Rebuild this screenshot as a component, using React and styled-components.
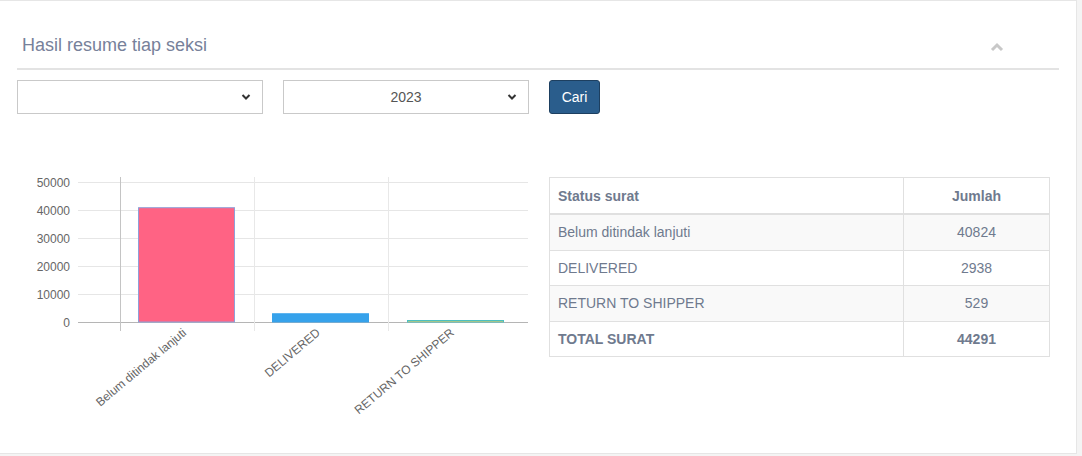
import React from 'react';
import styled, { createGlobalStyle } from 'styled-components';

const GlobalStyle = createGlobalStyle`
  body {
    margin: 0;
    background: #f4f4f4;
    font-family: "Liberation Sans", Arial, sans-serif;
  }
`;

const Card = styled.section`
  box-sizing: border-box;
  width: 1077px;
  height: 454px;
  background: #fff;
  border-top: 1px solid #e6e6e6;
  border-right: 1px solid #e6e6e6;
  border-bottom: 1px solid #e6e6e6;
  padding: 0 17px 0 17px;
`;

const Header = styled.div`
  display: flex;
  align-items: center;
  justify-content: space-between;
  height: 69px;
  padding: 22px 5px 0 5px;
  box-sizing: border-box;
  border-bottom: 2px solid #e3e3e3;
`;

const Title = styled.h3`
  margin: 0;
  font-size: 18px;
  font-weight: normal;
  color: #77819a;
`;

const Collapse = styled.span`
  display: flex;
  margin-right: 50px;
  margin-top: 2px;
`;

const Controls = styled.div`
  display: flex;
  gap: 20px;
  margin-top: 10px;
`;

const SelectWrap = styled.div`
  position: relative;
  width: 246px;
  height: 34px;
`;

const Select = styled.select`
  appearance: none;
  box-sizing: border-box;
  width: 100%;
  height: 100%;
  border: 1px solid #c9c9c9;
  border-radius: 0;
  background: #fff;
  font-family: "Liberation Sans", Arial, sans-serif;
  font-size: 14px;
  color: #555;
  padding: 0 8px;
  text-align-last: ${p => (p.$center ? 'center' : 'left')};
  outline: none;
`;

const Arrow = styled.svg`
  position: absolute;
  right: 12px;
  top: 13px;
  pointer-events: none;
`;

const Button = styled.button`
  box-sizing: border-box;
  height: 34px;
  width: 51px;
  background: #2a5d8c;
  border: 1px solid #1d3f60;
  border-radius: 3px;
  color: #fff;
  font-family: "Liberation Sans", Arial, sans-serif;
  font-size: 14px;
  padding: 0;
`;

const Body = styled.div`
  display: flex;
  align-items: flex-start;
  margin-top: 55px;
`;

const Chart = styled.svg`
  display: block;
  flex: none;
`;

const Table = styled.table`
  margin-top: 8px;
  margin-left: 19px;
  width: 501px;
  border-collapse: collapse;
  font-size: 14px;
  color: #6f7a8e;
`;

const Th = styled.th`
  height: 35px;
  padding: 0 8px;
  border: 1px solid #e0e0e0;
  border-bottom: 2px solid #e0e0e0;
  font-weight: bold;
  text-align: ${p => (p.$center ? 'center' : 'left')};
`;

const Row = styled.tr`
  background: ${p => (p.$striped ? '#f9f9f9' : '#fff')};
`;

const Td = styled.td`
  height: 34.5px;
  padding: 0 8px;
  border: 1px solid #e0e0e0;
  font-weight: ${p => (p.$bold ? 'bold' : 'normal')};
  text-align: ${p => (p.$center ? 'center' : 'left')};
`;

const rows = [
  { label: 'Belum ditindak lanjuti', value: 40824 },
  { label: 'DELIVERED', value: 2938 },
  { label: 'RETURN TO SHIPPER', value: 529 },
];

const bars = [
  { x: 121, fill: '#ff6384', stroke: '#8fa0d8' },
  { x: 255, fill: '#36a2eb', stroke: '#36a2eb' },
  { x: 390, fill: '#ffcd56', stroke: '#4bc0c0' },
];

const ZERO = 153;
const STEP = 28;

const BarChart = () => (
  <Chart width="513" height="270" viewBox="0 0 513 270">
    {[0, 1, 2, 3, 4, 5].map(i => {
      const y = ZERO - i * STEP + 0.5;
      return (
        <g key={i}>
          <line x1="61" x2="511" y1={y} y2={y} stroke={i === 0 ? '#b5b5b5' : '#e6e6e6'} />
          <text
            x="53"
            y={y + 4}
            textAnchor="end"
            fontSize="12"
            fill="#666"
            fontFamily="Liberation Sans, Arial, sans-serif"
          >
            {i * 10000}
          </text>
        </g>
      );
    })}
    {[103, 237, 371].map((x, i) => (
      <line
        key={x}
        x1={x + 0.5}
        x2={x + 0.5}
        y1="8"
        y2="162"
        stroke={i === 0 ? '#c4c4c4' : '#e8e8e8'}
      />
    ))}
    {rows.map((r, i) => {
      const h = Math.max((r.value / 10000) * STEP, 1.5);
      return (
        <rect
          key={r.label}
          x={bars[i].x + 0.5}
          y={ZERO - h}
          width="96"
          height={h}
          fill={bars[i].fill}
          stroke={bars[i].stroke}
          strokeWidth="1"
        />
      );
    })}
    {rows.map((r, i) => {
      const x = 170 + i * 134;
      return (
        <text
          key={r.label}
          x={x}
          y="165"
          textAnchor="end"
          fontSize="12"
          fill="#666"
          fontFamily="Liberation Sans, Arial, sans-serif"
          transform={`rotate(-40 ${x} 165)`}
        >
          {r.label}
        </text>
      );
    })}
  </Chart>
);

const App = () => {
  const total = rows.reduce((s, r) => s + r.value, 0);
  return (
    <>
      <GlobalStyle />
      <Card>
        <Header>
          <Title>Hasil resume tiap seksi</Title>
          <Collapse>
            <svg width="14" height="10" viewBox="0 0 14 10">
              <polyline points="2,8 7,3 12,8" fill="none" stroke="#c8c8c8" strokeWidth="3" />
            </svg>
          </Collapse>
        </Header>
        <Controls>
          <SelectWrap>
            <Select defaultValue="">
              <option value="" />
            </Select>
            <Arrow width="10" height="8" viewBox="0 0 10 8">
              <polyline points="1.5,2 5,5.5 8.5,2" fill="none" stroke="#333" strokeWidth="2" />
            </Arrow>
          </SelectWrap>
          <SelectWrap>
            <Select $center defaultValue="2023">
              <option value="2023">2023</option>
            </Select>
            <Arrow width="10" height="8" viewBox="0 0 10 8">
              <polyline points="1.5,2 5,5.5 8.5,2" fill="none" stroke="#333" strokeWidth="2" />
            </Arrow>
          </SelectWrap>
          <Button>Cari</Button>
        </Controls>
        <Body>
          <BarChart />
          <Table>
            <thead>
              <tr>
                <Th>Status surat</Th>
                <Th $center style={{ width: '129px' }}>Jumlah</Th>
              </tr>
            </thead>
            <tbody>
              {rows.map((r, i) => (
                <Row key={r.label} $striped={i % 2 === 0}>
                  <Td>{r.label}</Td>
                  <Td $center>{r.value}</Td>
                </Row>
              ))}
              <Row>
                <Td $bold>TOTAL SURAT</Td>
                <Td $bold $center>{total}</Td>
              </Row>
            </tbody>
          </Table>
        </Body>
      </Card>
    </>
  );
};

export default App;
